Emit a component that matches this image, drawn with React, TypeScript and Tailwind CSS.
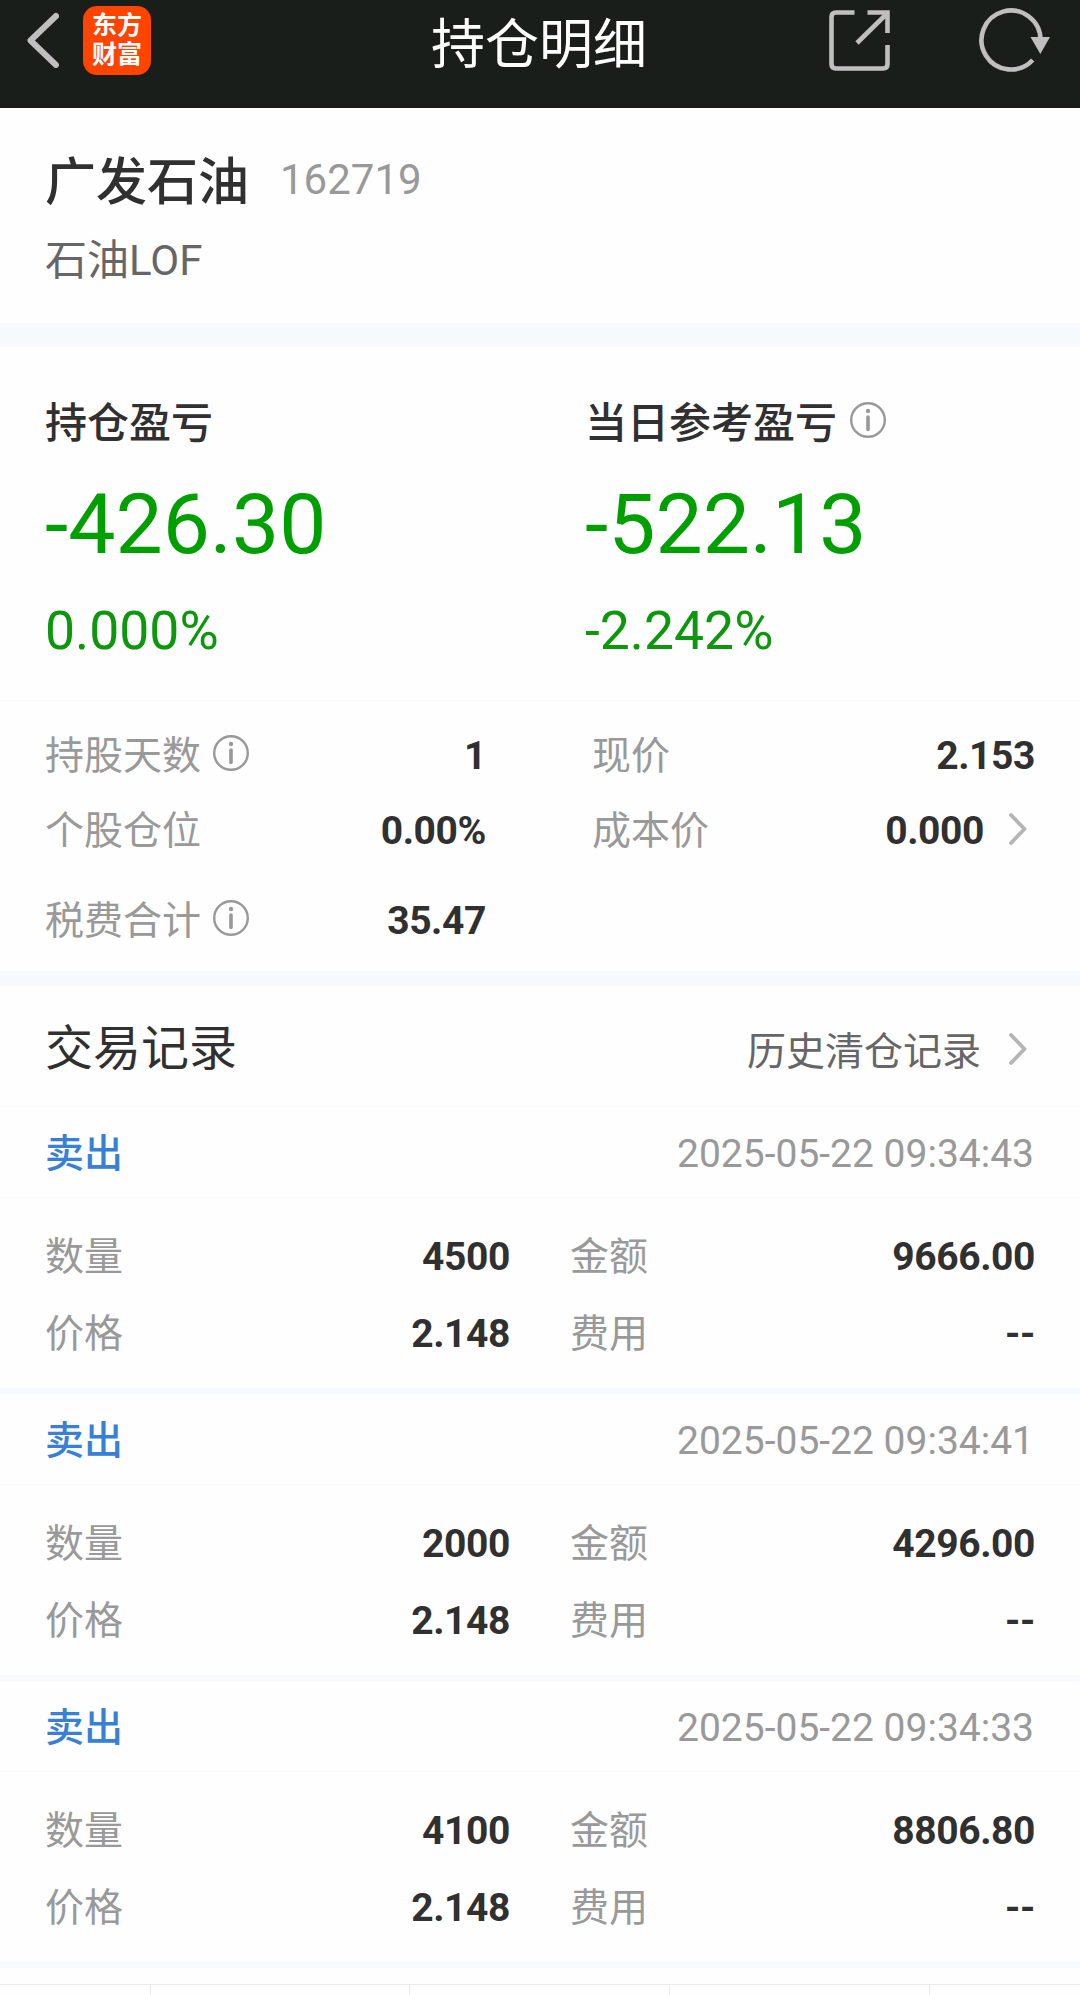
import type { ReactNode } from "react";

type Trade = {
    side: string;
    time: string;
    quantity: string;
    price: string;
    amount: string;
    fee: string;
};

const TRADES: Trade[] = [
    { side: "卖出", time: "2025-05-22 09:34:43", quantity: "4500", price: "2.148", amount: "9666.00", fee: "--" },
    { side: "卖出", time: "2025-05-22 09:34:41", quantity: "2000", price: "2.148", amount: "4296.00", fee: "--" },
    { side: "卖出", time: "2025-05-22 09:34:33", quantity: "4100", price: "2.148", amount: "8806.80", fee: "--" },
];

function InfoIcon() {
    return (
        <svg width="36" height="36" viewBox="0 0 36 36" className="shrink-0 text-[#999]">
            <circle cx="18" cy="18" r="16.8" fill="none" stroke="currentColor" strokeWidth="2.4" />
            <circle cx="18" cy="9" r="2.2" fill="currentColor" />
            <path d="M18 15v12.5" stroke="currentColor" strokeWidth="3.6" strokeLinecap="round" />
        </svg>
    );
}

function Chevron() {
    return (
        <svg width="18" height="32" viewBox="0 0 18 32" className="shrink-0">
            <path d="M2 2l13.5 14L2 30" fill="none" stroke="#b5b5b8" strokeWidth="3.8" strokeLinecap="round" strokeLinejoin="round" />
        </svg>
    );
}

function Header() {
    return (
        <header className="flex h-[108px] items-start justify-between bg-[#1a1e1b] pr-[30px] pl-[26px]">
            <div className="flex w-[301px] items-start gap-[24px]">
                <svg width="33" height="56" viewBox="0 0 33 56" className="mt-[12px]">
                    <path d="M30 4L4.500 28.5L30 53" fill="none" stroke="#bfbfbf" strokeWidth="6" strokeLinecap="round" strokeLinejoin="round" />
                </svg>
                <div className="mt-[6px] flex h-[69px] w-[68px] flex-col items-center justify-center rounded-[14px] bg-[#ff4400] text-[25px] leading-[29px] font-bold text-white">
                    <span className="-mt-px">东方</span>
                    <span>财富</span>
                </div>
            </div>
            <h1 className="mt-[16px] ml-px text-[54px] leading-[60px] font-normal text-white">持仓明细</h1>
            <div className="flex w-[300px] justify-end gap-[88px]">
                <svg width="62" height="62" viewBox="0 0 62 62" className="mt-[10px]" fill="none" stroke="#bfbfbf" strokeWidth="4.6">
                    <path d="M25.5 2.5H7Q2.5 2.5 2.5 7V54Q2.5 58.5 7 58.5H54Q58.5 58.5 58.5 54V35" />
                    <path d="M38.5 2.5H58.5V23" />
                    <path d="M57.5 4L28 33" />
                </svg>
                <svg width="71" height="66" viewBox="0 0 71 66" className="mt-[7px]">
                    <path d="M61.5 33A29.5 29.5 0 1 0 53.7 53" fill="none" stroke="#bfbfbf" strokeWidth="4.6" />
                    <path d="M51.5 30H71L61.3 47z" fill="#bfbfbf" />
                </svg>
            </div>
        </header>
    );
}

function Summary({ label, value, percent, info }: { label: string; value: string; percent: string; info?: boolean }) {
    return (
        <div className="w-[540px] shrink-0">
            <div className="mt-[46px] flex h-[60px] items-center gap-[13px]">
                <span className="mt-[2px] text-[42px] leading-[60px] font-medium text-[#303030]">{label}</span>
                {info && (
                    <span className="-mt-[6px]">
                        <InfoIcon />
                    </span>
                )}
            </div>
            <div className="mt-[30px] text-[84px] leading-[84px] text-[#009f00]">{value}</div>
            <div className="mt-[34px] text-[53.5px] leading-[60px] text-[#0c970c]">{percent}</div>
        </div>
    );
}

function Field({ label, info, children }: { label: string; info?: boolean; children: ReactNode }) {
    return (
        <div className="flex h-full items-center justify-between text-[39px]">
            <div className="flex items-center gap-[12px] text-[#999]">
                <span>{label}</span>
                {info && (
                    <span className="-mt-[7px]">
                        <InfoIcon />
                    </span>
                )}
            </div>
            <div className="flex items-center font-bold tracking-[-0.4px] text-[#303030]">{children}</div>
        </div>
    );
}

function TradeRecord({ trade }: { trade: Trade }) {
    return (
        <li className="h-[287px] border-b-[6px] border-[#f6faff]">
            <div className="flex h-[91px] items-center justify-between border-b border-[#fafafa] pt-[5px] pr-[46px] pl-[45px] text-[39px]">
                <span className="font-medium text-[#3880d6]">{trade.side}</span>
                <span className="text-[#999]">{trade.time}</span>
            </div>
            <div className="grid auto-rows-[77px] grid-cols-[465px_465px] gap-x-[60px] pt-[21px] pl-[45px]">
                <Field label="数量">{trade.quantity}</Field>
                <Field label="金额">{trade.amount}</Field>
                <Field label="价格">{trade.price}</Field>
                <Field label="费用">{trade.fee}</Field>
            </div>
        </li>
    );
}

export default function App() {
    return (
        <div className="h-[1995px] w-[1080px] overflow-hidden bg-[#fefefe] font-['Roboto','Noto_Sans_CJK_SC',sans-serif] leading-none">
            <Header />

            <section className="h-[215px] px-[45px] pt-[42px]">
                <div className="flex h-[60px] items-center gap-[31px]">
                    <span className="mt-[5px] text-[51px] leading-[60px] font-medium text-[#303030]">广发石油</span>
                    <span className="text-[42px] text-[#999]">162719</span>
                </div>
                <div className="mt-[31px] text-[42px] leading-[40px] text-[#666]">石油LOF</div>
            </section>

            <div className="h-[24px] bg-[#f6faff]" />

            <section className="flex h-[354px] border-b border-[#fafafa] pl-[45px]">
                <Summary label="持仓盈亏" value="-426.30" percent="0.000%" />
                <Summary label="当日参考盈亏" value="-522.13" percent="-2.242%" info />
            </section>

            <section className="grid h-[270px] grid-cols-[441px_443px] grid-rows-[75px_75px_15px_75px] gap-x-[106px] pt-[18px] pl-[45px]">
                <Field label="持股天数" info>
                    1
                </Field>
                <Field label="现价">2.153</Field>
                <Field label="个股仓位">0.00%</Field>
                <Field label="成本价">
                    0.000
                    <span className="-mt-[6px] mr-[8px] ml-[25px]">
                        <Chevron />
                    </span>
                </Field>
                <div className="col-span-2" />
                <Field label="税费合计" info>
                    35.47
                </Field>
            </section>

            <div className="h-[15px] bg-[#f6faff]" />

            <section>
                <div className="flex h-[121px] items-baseline justify-between border-b border-[#fafafa] pt-[39px] pr-[53px] pl-[45px]">
                    <h2 className="text-[48px] font-normal text-[#303030]">交易记录</h2>
                    <div className="flex items-center text-[39px] text-[#666]">
                        历史清仓记录
                        <span className="-mt-[8px] ml-[28px]">
                            <Chevron />
                        </span>
                    </div>
                </div>
                <ul>
                    {TRADES.map((trade) => (
                        <TradeRecord key={trade.time} trade={trade} />
                    ))}
                </ul>
            </section>

            {/* top edge of the bottom tab bar */}
            <nav className="mt-[16px] grid h-[20px] grid-cols-[151px_259px_260px_260px_150px] border-t border-[#ebebeb]">
                <span className="border-r border-[#ebebeb]" />
                <span className="border-r border-[#ebebeb]" />
                <span className="border-r border-[#ebebeb]" />
                <span className="border-r border-[#ebebeb]" />
                <span />
            </nav>
        </div>
    );
}
